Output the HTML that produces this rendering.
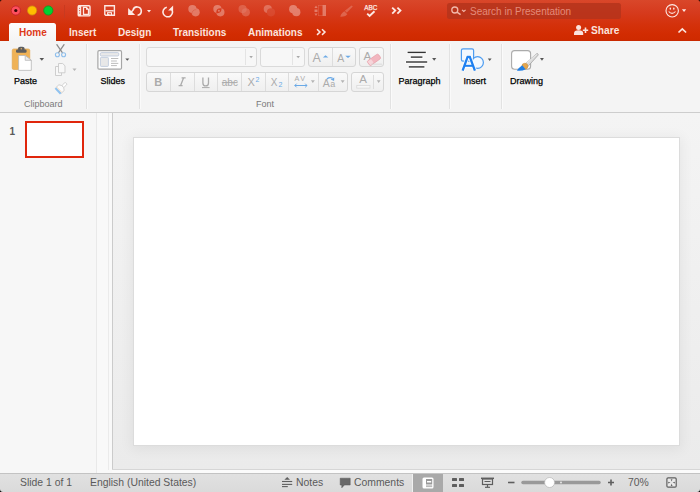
<!DOCTYPE html>
<html><head><meta charset="utf-8">
<style>
*{margin:0;padding:0;box-sizing:border-box}
html,body{width:700px;height:492px;overflow:hidden;background:#ececec;font-family:"Liberation Sans",sans-serif}
.a{position:absolute}
svg{position:absolute;overflow:visible}
#title{left:0;top:0;width:700px;height:41px;background:linear-gradient(#d9472a 0px,#d63b1e 12px,#d4320c 24px,#d22c02 34px,#cf2a00 40px,#c22800 41px)}
#ribbon{left:0;top:41px;width:700px;height:71px;background:#f4f4f4}
#ribline{left:0;top:112px;width:700px;height:1px;background:#cdcdcd}
#panel{left:0;top:113px;width:96px;height:360px;background:#f7f7f7}
#split{left:96px;top:113px;width:17px;height:360px;background:#f9f9f9;border-left:1px solid #e9e9e9;border-right:1px solid #cbcbcb}
#splitl{left:108px;top:113px;width:1px;height:357px;background:#ebebeb}
#main{left:113px;top:113px;width:587px;height:356px;background:linear-gradient(#f4f4f4,#ebebeb)}
#slide{left:133px;top:137px;width:547px;height:309px;background:#fff;border:1px solid #dcdcdc;box-shadow:0 2px 12px 2px rgba(0,0,0,.055)}
#mainbot{left:112px;top:469px;width:588px;height:1px;background:#d6d6d6}
#mainbot2{left:112px;top:470px;width:588px;height:3px;background:#fbfbfb}
#status{left:0;top:473px;width:700px;height:19px;background:linear-gradient(#e1e1e1,#dadada);border-top:1px solid #c3c3c3}
.tab{top:24px;height:17px;font-size:10px;font-weight:bold;color:#fbe3dd;line-height:17px;white-space:nowrap}
.lbl{font-size:9px;color:#000;-webkit-text-stroke:0.25px #000;white-space:nowrap;line-height:10px}
.glbl{font-size:9px;color:#7a7a7a;white-space:nowrap;line-height:10px}
.sep{width:1px;top:44px;height:65px;background:#e2e2e2;box-shadow:1px 0 0 #fafafa}
.st{font-size:10.4px;color:#5a5a5a;white-space:nowrap;line-height:12px;top:477px}
.box{border:1px solid #dadada;border-radius:3px;background:#f7f7f7}
.btn{border:1px solid #d6d6d6;border-radius:3px;background:linear-gradient(#f9f9f9,#efefef)}
.dv{width:1px;background:#dddddd}
.dis{color:#b9b9b9}
</style></head><body>
<div id="title" class="a"></div>
<div id="ribbon" class="a"></div>
<div id="ribline" class="a"></div>
<div id="panel" class="a"></div>
<div id="split" class="a"></div>
<div id="splitl" class="a"></div>
<div id="main" class="a"></div>
<div id="slide" class="a"></div>
<div id="mainbot" class="a"></div>
<div id="mainbot2" class="a"></div>
<div id="status" class="a"></div>

<!-- traffic lights -->
<svg style="left:0;top:0" width="70" height="22">
 <circle cx="15.8" cy="10.5" r="4.6" fill="#fd4f5d" stroke="#c0202a" stroke-width="0.8"/>
 <circle cx="15.8" cy="10.5" r="1.6" fill="#3b0505"/>
 <circle cx="32.1" cy="10.5" r="4.6" fill="#ffbe00" stroke="#d08a10" stroke-width="0.8"/>
 <circle cx="48.3" cy="10.5" r="4.6" fill="#00d133" stroke="#0a9a20" stroke-width="0.8"/>
 <line x1="64.5" y1="5" x2="64.5" y2="18" stroke="#c83a20" stroke-width="1"/>
</svg>

<!-- toolbar icons -->
<svg style="left:0;top:0" width="700" height="22" fill="none" stroke="#fde9e4" stroke-width="1.3">
 <!-- sidebar -->
 <rect x="78.2" y="5.7" width="11.8" height="10.2" rx="1" stroke-width="1.4"/>
 <rect x="78" y="5.5" width="3.2" height="10.6" fill="#fde9e4" stroke="none"/>
 <g fill="#d63b1e" stroke="none"><circle cx="79.6" cy="8.2" r="0.55"/><circle cx="79.6" cy="10.6" r="0.55"/><circle cx="79.6" cy="13" r="0.55"/></g>
 <path d="M83.5 7.3 H86.3 L88.5 9.5 V14.5 H83.5 Z" stroke-width="1.3"/>
 <path d="M86 7 V9.8 H88.8 Z" fill="#fde9e4" stroke="none"/>
 <!-- save -->
 <path d="M104.8 5.8 H114.4 V15.3 H105.7 L104.8 14.4 Z" stroke-width="1.4"/>
 <path d="M105.5 10.8 H113.7" stroke-width="1.4"/>
 <rect x="107.6" y="12.7" width="3.9" height="2.7" stroke-width="1.1"/>
 <rect x="108" y="13.9" width="1.3" height="1.5" fill="#fde9e4" stroke="none"/>
 <!-- undo -->
 <path d="M128.1 8.1 V15.1 H135.1 Z" fill="#fde9e4" stroke="none"/>
 <path d="M130.5 12.7 L133 10.2 A4.2 4.2 0 1 1 137.6 15.3" stroke-width="1.6"/>
 <path d="M147 10 h4 l-2 2.6z" fill="#fde9e4" stroke="none"/>
 <!-- redo -->
 <path d="M173.1 5.6 V10.6 H168.1 Z" fill="#fde9e4" stroke="none"/>
 <path d="M170.8 8.3 A4.8 4.8 0 1 1 166.8 7.3" stroke-width="1.6"/>
</svg>
<svg style="left:0;top:0" width="700" height="22" fill="#ffffff" fill-opacity="0.32" stroke="none">
 <g opacity="0.32" fill="#fff" fill-opacity="1"><circle cx="192.4" cy="9.1" r="4.1"/><circle cx="195.6" cy="12.3" r="4.1"/></g>
 <path d="M196.3 9.7 A4.1 4.1 0 0 0 191.8 13.8" fill="none" stroke="#d63b1e" stroke-opacity="0.4" stroke-width="0.8"/>
 <g opacity="0.32" fill="#fff" fill-opacity="1"><path fill-rule="evenodd" d="M224.5 12.3 a4.1 4.1 0 1 0 -8.2 0 a4.1 4.1 0 1 0 8.2 0Z M221.5 9.1 a4.1 4.1 0 1 0 -8.2 0 a4.1 4.1 0 1 0 8.2 0Z"/><circle cx="218.9" cy="10.7" r="1"/></g>
 <g opacity="0.32" fill="#fff" fill-opacity="1"><circle cx="242.6" cy="9.1" r="4.1" fill-opacity="0.55"/><circle cx="245.8" cy="12.3" r="4.1" fill-opacity="0.6"/></g>
 <g opacity="0.32" fill="#fff" fill-opacity="1"><circle cx="267.8" cy="9.1" r="4.1" fill-opacity="0.8"/><circle cx="271" cy="12.3" r="4.1" fill="#e06a55"/></g>
 <g opacity="0.34" fill="#fff" fill-opacity="1"><circle cx="293.2" cy="9.2" r="4.1"/><circle cx="296.3" cy="12.2" r="4.1"/></g>
 <!-- dashed list -->
 <rect x="322.8" y="5" width="3.2" height="11"/>
 <rect x="318.5" y="5.3" width="4.3" height="10.4" fill="none" stroke="#fff" stroke-opacity="0.2" stroke-width="0.6"/>
 <path d="M314.4 8 l1.6-2.4 1.6 2.4z M314.5 9.5 h3 v2.6 h-3z M314.4 13.5 h3.2 l-1.6 2.4z"/>
 <!-- brush -->
 <path d="M351.6 5.4 L352.8 6.6 L346.8 12.8 L344.8 10.8 Z" fill-opacity="0.2"/>
 <path d="M344.3 11.3 L347.3 14.3 L345.4 16 Q342.8 17 340.3 16.8 Q340.5 14.4 342.2 12.9 Z" fill-opacity="0.22"/>
</svg>
<svg style="left:0;top:0" width="700" height="22">
 <text x="364.2" y="9.9" font-family="Liberation Sans" font-size="7" fill="#fde9e4" stroke="#fde9e4" stroke-width="0.25" textLength="13.2" lengthAdjust="spacingAndGlyphs">ABC</text>
 <path d="M367.2 13.6 l2.4 2.4 4.9 -4.8" fill="none" stroke="#fde9e4" stroke-width="1.9"/>
 <path d="M392.2 7.6 l3.1 3 -3.1 3 M397.4 7.6 l3.1 3 -3.1 3" fill="none" stroke="#fde9e4" stroke-width="1.8"/>
 <!-- search box -->
 <rect x="447" y="3" width="174" height="16" rx="2.5" fill="#b3331b" fill-opacity="0.8"/>
 <circle cx="454.8" cy="10" r="3" fill="none" stroke="#f2b8aa" stroke-width="1.3"/>
 <line x1="457" y1="12.2" x2="460.6" y2="14.6" stroke="#f2b8aa" stroke-width="1.5"/>
 <path d="M462 9.8 l1.8 1.6 1.8 -1.6" fill="none" stroke="#f2b8aa" stroke-width="1.1"/>
 <!-- smiley -->
 <circle cx="672.2" cy="10.8" r="6.2" fill="none" stroke="#fde9e4" stroke-width="1.1"/>
 <ellipse cx="670.3" cy="8.7" rx="0.75" ry="1.15" fill="#fde9e4"/><ellipse cx="673.8" cy="8.7" rx="0.75" ry="1.15" fill="#fde9e4"/>
 <path d="M668.7 11.5 q3.3 3.8 6.8 0" fill="none" stroke="#fde9e4" stroke-width="1.1"/>
 <path d="M681.9 9.2 h4.3 l-2.15 2.7z" fill="#fde9e4"/>
</svg>
<div class="a" style="left:470px;top:5px;font-size:10px;line-height:14px;color:#e48b7a;white-space:nowrap">Search in Presentation</div>

<!-- tabs -->
<div class="a" style="left:9px;top:23px;width:47px;height:18px;background:linear-gradient(#fdfdfd,#f4f4f4);border-radius:2.5px 2.5px 0 0"></div>
<div class="a tab" style="left:19px;color:#de3a1a">Home</div>
<div class="a tab" style="left:69px">Insert</div>
<div class="a tab" style="left:118px">Design</div>
<div class="a tab" style="left:173px">Transitions</div>
<div class="a tab" style="left:248px">Animations</div>
<svg style="left:0;top:0" width="700" height="41">
 <path d="M317 29.3 l3 2.8 -3 2.8 M322 29.3 l3 2.8 -3 2.8" fill="none" stroke="#fbe3dd" stroke-width="1.5"/>
 <!-- share icon -->
 <circle cx="578.6" cy="27.5" r="2.5" fill="#fbe3dd"/>
 <path d="M574 35 v-1.6 q0 -3.2 4.6 -3.2 q4.6 0 4.6 3.2 v1.6z" fill="#fbe3dd"/>
 <path d="M582.8 30.2 h5.4 M585.5 27.5 v5.4" stroke="#fbe3dd" stroke-width="1.6"/>
 <path d="M678.5 32.5 l3.8 -3.6 3.8 3.6" fill="none" stroke="#fbe3dd" stroke-width="1.7"/>
</svg>
<div class="a tab" style="left:591px;top:22.4px;font-size:10.2px">Share</div>

<!-- ribbon separators -->
<div class="a sep" style="left:86px"></div>
<div class="a sep" style="left:139px"></div>
<div class="a sep" style="left:390px"></div>
<div class="a sep" style="left:449px"></div>
<div class="a sep" style="left:501px"></div>

<!-- clipboard group -->
<svg style="left:0;top:40px" width="140" height="72">
 <!-- clipboard -->
 <rect x="12.2" y="8.9" width="17.6" height="20.6" rx="1.6" fill="#efb256" stroke="#dfa24c" stroke-width="0.6"/>
 <rect x="17.9" y="6.8" width="6.8" height="4.6" rx="2.4" fill="#5e5e5e"/><rect x="16" y="9.6" width="10.6" height="3.2" rx="1.2" fill="#5e5e5e"/>
 <circle cx="21.3" cy="8.7" r="0.7" fill="#e9b465"/>
 <path d="M18.6 15.5 h6.6 l6.1 4.8 v10.1 h-12.7z" fill="#fff" stroke="#b8b8b8" stroke-width="0.8"/>
 <path d="M25.2 15.5 v4.8 h6.1z" fill="#ececec" stroke="#b8b8b8" stroke-width="0.8" stroke-linejoin="round"/>
 <path d="M39.5 18 h4.6 l-2.3 2.8z" fill="#555"/>
 <!-- scissors -->
 <g fill="#8c8c8c"><path d="M56 4.4 L57.2 4 L63 12.6 L62.2 13.4Z"/><path d="M64.9 4.4 L63.7 4 L57.9 12.6 L58.7 13.4Z"/></g>
 <g fill="none" stroke="#8fbfec" stroke-width="1.1"><circle cx="57.4" cy="14.7" r="2"/><circle cx="63.6" cy="14.7" r="2"/></g>
 <!-- copy -->
 <g fill="#f8f8f8" stroke="#c9c9c9" stroke-width="0.9"><path d="M55.5 26.5 h4 l2 2 v7 h-6z"/><path d="M58.5 23.5 h4.2 l2.3 2.3 v7 h-6.5z"/></g>
 <path d="M72.5 28.6 h4 l-2 2.4z" fill="#b5b5b5"/>
 <!-- painter -->
 <g transform="translate(57.3,51.6) rotate(47)">
  <rect x="-1.4" y="-12.3" width="2.8" height="5.2" rx="1.2" fill="#fff" stroke="#c9c9c9" stroke-width="0.8"/>
  <path d="M-3.9 -1.8 V-5.8 L-1.4 -7.4 H1.4 L3.9 -5.8 V-1.8Z" fill="#fbfbfb" stroke="#c9c9c9" stroke-width="0.8"/>
  <rect x="-3.9" y="-2" width="7.8" height="2" fill="#8ec2f0"/>
  <line x1="-3.5" y1="-2.8" x2="3.5" y2="-2.8" stroke="#f3cfa8" stroke-width="0.6"/>
 </g>
</svg>
<div class="a lbl" style="left:14px;top:76px">Paste</div>
<div class="a glbl" style="left:24px;top:99px">Clipboard</div>

<!-- slides -->
<svg style="left:0;top:40px" width="140" height="72">
 <rect x="97.9" y="10.7" width="23.6" height="18.5" rx="1.2" fill="#fff" stroke="#a6a6a6" stroke-width="1.2"/>
 <rect x="100.3" y="12.6" width="18.5" height="3.4" rx="1.2" fill="#e9e9e9" stroke="#b9c5d9" stroke-width="0.8"/>
 <rect x="100.4" y="17.4" width="8" height="9" rx="0.8" fill="#e8e8e8" stroke="#b9c5d9" stroke-width="0.8"/>
 <g stroke="#b5b5b5" stroke-width="0.9"><line x1="111" y1="18.5" x2="118.3" y2="18.5"/><line x1="111" y1="21" x2="116.9" y2="21"/><line x1="111" y1="23.4" x2="118.3" y2="23.4"/><line x1="111" y1="25.6" x2="116.9" y2="25.6"/></g>
 <path d="M125.3 18.4 h4 l-2 2.4z" fill="#555"/>
</svg>
<div class="a lbl" style="left:100.5px;top:76px">Slides</div>

<!-- font group -->
<div class="a box" style="left:146px;top:47px;width:111px;height:20px"></div>
<div class="a dv" style="left:245px;top:49px;height:16px;background:#e4e4e4"></div>
<div class="a box" style="left:260px;top:47px;width:45px;height:20px"></div>
<div class="a dv" style="left:292px;top:49px;height:16px;background:#e4e4e4"></div>
<div class="a btn" style="left:308px;top:47px;width:48px;height:20px"></div>
<div class="a dv" style="left:332px;top:48px;height:18px"></div>
<div class="a btn" style="left:359px;top:47px;width:25px;height:20px"></div>
<div class="a btn" style="left:146px;top:72px;width:202px;height:20px"></div>
<div class="a dv" style="left:170px;top:73px;height:18px"></div>
<div class="a dv" style="left:194px;top:73px;height:18px"></div>
<div class="a dv" style="left:217px;top:73px;height:18px"></div>
<div class="a dv" style="left:241px;top:73px;height:18px"></div>
<div class="a dv" style="left:265px;top:73px;height:18px"></div>
<div class="a dv" style="left:288px;top:73px;height:18px"></div>
<div class="a dv" style="left:318px;top:73px;height:18px"></div>
<div class="a btn" style="left:351px;top:72px;width:33px;height:20px"></div>
<div class="a dv" style="left:373px;top:75px;height:14px"></div>
<svg style="left:0;top:40px" width="700" height="72">
 <g fill="#a9a9a9">
  <path d="M249.3 16 h3.6 l-1.8 2.2z"/>
  <path d="M296.4 16 h3.6 l-1.8 2.2z"/>
 </g>
 <g font-family="Liberation Sans" fill="#ababab">
  <text x="312.6" y="22.2" font-size="12.5">A</text>
  <text x="337.2" y="22.2" font-size="10.5">A</text>
  <text x="363.4" y="20" font-size="11.5">A</text>
  <text x="154.2" y="46" font-size="11" font-weight="bold">B</text>
  <text x="221.8" y="46" font-size="10">abc</text>
  <text x="247.4" y="46.2" font-size="11">X</text>
  <text x="270.8" y="46.2" font-size="10">X</text>
  <text x="294.6" y="41.4" font-size="7.2" letter-spacing="1.3">AV</text>
  <text x="322.7" y="46.8" font-size="10.5">A</text><text x="330.2" y="46.6" font-size="9">a</text>
  <text x="359.3" y="43.1" font-size="11.5">A</text>
 </g>
 <g fill="none" stroke="#ababab">
  <path d="M181.6 37.8 h4 M178.6 45.6 h4 M183.6 37.8 L180.6 45.6" stroke-width="1.3"/>
  <path d="M202.9 37.6 v5.3 q0 3 2.8 3 q2.8 0 2.8 -3 v-5.3" stroke-width="1.3"/>
  <line x1="202" y1="47.6" x2="209.6" y2="47.6" stroke-width="1"/>
  <line x1="221.8" y1="42.6" x2="237.6" y2="42.6" stroke-width="1"/>
 </g>
 <g fill="#6aa9e6">
  <path d="M322.8 17.6 l2.75-2.4 2.75 2.4z"/>
  <path d="M345.2 15.8 h5.6 l-2.8 2.2z"/><path d="M330.6 39.4 L334.3 37.4 L334.1 41 Z"/>
  <text x="255.4" y="42.2" font-family="Liberation Sans" font-size="7">2</text>
  <text x="278.6" y="46.6" font-family="Liberation Sans" font-size="7">2</text>
 </g>
 <g stroke="#6aa9e6" stroke-width="1" fill="none"><path d="M294.8 45.5 h12.2 M296.6 43.7 l-1.8 1.8 1.8 1.8 M305.2 43.7 l1.8 1.8 -1.8 1.8"/><path d="M326.9 38.9 q2.6 -2 5.6 -0.8" stroke-width="1.3"/></g>
 <g fill="#b4b4b4"><path d="M310.9 40.2 h3.9 l-1.95 2.7z"/><path d="M340.7 40.2 h3.9 l-1.95 2.7z"/><path d="M376.8 40.3 h3.8 l-1.9 2.6z"/></g>
 <rect x="356.8" y="45.6" width="13.2" height="2.5" fill="#f7f7f7" stroke="#d6d6d6" stroke-width="0.7"/>
 <!-- eraser -->
 <g transform="translate(374,19.8) rotate(-35)">
  <rect x="-6.7" y="-2.8" width="13.4" height="5.6" rx="1.4" fill="#f2b6bf" stroke="#e6a0aa" stroke-width="0.7"/>
  <rect x="-6.2" y="-2.3" width="4.2" height="4.6" rx="0.9" fill="#f7d5da"/>
 </g>
 <line x1="371" y1="24.2" x2="382" y2="24.2" stroke="#d8d8d8" stroke-width="0.8"/>
</svg>
<div class="a glbl" style="left:256px;top:99px">Font</div>

<!-- paragraph / insert / drawing -->
<svg style="left:0;top:40px" width="700" height="72">
 <g stroke="#fff" stroke-width="3.2" stroke-linecap="round" opacity="0.8"><line x1="408" y1="12.6" x2="425.4" y2="12.6"/><line x1="411" y1="17.3" x2="422" y2="17.3"/><line x1="406.4" y1="22.2" x2="426.8" y2="22.2"/><line x1="409.2" y1="27.1" x2="424" y2="27.1"/></g>
 <g stroke="#333" stroke-width="1.4"><line x1="407.6" y1="12.4" x2="425.8" y2="12.4"/><line x1="410.8" y1="17.1" x2="422.4" y2="17.1"/><line x1="406" y1="22" x2="427.2" y2="22"/><line x1="408.8" y1="26.9" x2="424.4" y2="26.9"/></g>
 <path d="M432.1 18.1 h4.2 l-2.1 2.7z" fill="#555"/>
 <!-- insert icon -->
 <rect x="461.4" y="8.8" width="12.2" height="12.4" rx="1.6" fill="#f1f7fe" stroke="#4d9cf0" stroke-width="1.2"/>
 <circle cx="477.6" cy="22.5" r="5.8" fill="#f4f9ff" stroke="#4d9cf0" stroke-width="1.2"/>
 <path d="M462.6 30.6 L467.6 16.9 H469.8 L474.9 30.6 M464.8 26 H472.6" fill="none" stroke="#fff" stroke-width="4" stroke-linejoin="miter" opacity="0.9"/>
 <path d="M462.6 30.6 L467.6 16.9 H469.8 L474.9 30.6" fill="none" stroke="#1f80f0" stroke-width="2.3" stroke-linejoin="miter"/>
 <line x1="464.8" y1="25.8" x2="472.6" y2="25.8" stroke="#1f80f0" stroke-width="2"/>
 <path d="M487.8 18.5 h3.8 l-1.9 2.5z" fill="#555"/>
 <!-- drawing icon -->
 <rect x="511.6" y="10.6" width="19" height="18.6" rx="3" fill="#fff" stroke="#ababab" stroke-width="1.1"/>
 <path d="M524.6 24.6 L536.4 13.8 Q537.6 13.2 538.1 14.1 Q538.3 14.9 537.9 15.4 L527.4 27Z" fill="#dcdcdc" stroke="#9a9a9a" stroke-width="0.7"/>
 <path d="M525.2 24.6 L536.6 14.2" stroke="#f4f4f4" stroke-width="0.8"/>
 <circle cx="524.9" cy="26.2" r="3" fill="#e3a54e" stroke="#c98b32" stroke-width="0.5"/>
 <path d="M522.2 25.2 Q518.8 27.6 516.8 30.6 Q522 31.4 525.6 29.2 Z" fill="#1f7fe6"/>
 <path d="M540 18.1 h3.9 l-1.95 2.7z" fill="#555"/>
</svg>
<div class="a lbl" style="left:398.5px;top:76px">Paragraph</div>
<div class="a lbl" style="left:463.5px;top:76px">Insert</div>
<div class="a lbl" style="left:510px;top:76px">Drawing</div>

<!-- thumbnail -->
<div class="a" style="left:9.4px;top:125.6px;font-size:10px;font-weight:bold;color:#5a5a5a;line-height:11px">1</div>
<div class="a" style="left:25px;top:121px;width:59px;height:37px;border:2px solid #e0260c;background:#fff"></div>

<!-- status bar -->
<div class="a st" style="left:20px">Slide 1 of 1</div>
<div class="a st" style="left:90px">English (United States)</div>
<div class="a st" style="left:296px">Notes</div>
<div class="a st" style="left:354px">Comments</div>
<div class="a" style="left:412px;top:474px;width:1px;height:18px;background:#f0f0f0"></div>
<div class="a" style="left:413px;top:474px;width:30px;height:18px;background:#a9a9a9"></div>
<div class="a st" style="left:628px">70%</div>
<svg style="left:0;top:472px" width="700" height="20">
 <g stroke="#5e5e5e" stroke-width="1.1"><line x1="282" y1="9.5" x2="292.2" y2="9.5"/><line x1="282" y1="12.4" x2="292.2" y2="12.4"/><line x1="282" y1="14.6" x2="287.8" y2="14.6"/></g>
 <path d="M284.4 7.8 l2.8-2.7 2.8 2.7z" fill="#5e5e5e"/>
 <path d="M340.2 6.2 h10 v6.8 h-5.8 l-2.6 2.8 v-2.8 h-1.6z" fill="#686868" stroke="#555" stroke-width="0.5"/>
 <rect x="422.5" y="5.5" width="11" height="11" rx="1.5" fill="#fff"/>
 <rect x="426" y="7" width="6.2" height="5.5" fill="#999"/>
 <rect x="427" y="9" width="4.2" height="1.5" fill="#fff"/>
 <rect x="426" y="13.3" width="6.2" height="1.8" fill="#bbb"/>
 <g fill="#5e5e5e"><rect x="452" y="6" width="5" height="3" rx="0.5"/><rect x="459" y="6" width="5" height="3" rx="0.5"/><rect x="452" y="12" width="5" height="3" rx="0.5"/><rect x="459" y="12" width="5" height="3" rx="0.5"/></g>
 <g fill="none" stroke="#5e5e5e"><rect x="482.5" y="7" width="10" height="5.5" stroke-width="1.2"/><line x1="481" y1="6.3" x2="494" y2="6.3" stroke-width="1.5"/><line x1="487.5" y1="12.5" x2="487.5" y2="15" stroke-width="1.2"/><line x1="485" y1="15.3" x2="490" y2="15.3" stroke-width="1.2"/><line x1="484.5" y1="9.5" x2="490.5" y2="9.5" stroke-width="1"/></g>
 <line x1="508" y1="10.5" x2="514.5" y2="10.5" stroke="#5e5e5e" stroke-width="1.6"/>
 <line x1="523" y1="10.5" x2="599" y2="10.5" stroke="#999" stroke-width="3.5" stroke-linecap="round"/>
 <circle cx="561" cy="10.5" r="0.9" fill="#eee"/>
 <circle cx="549.6" cy="10.5" r="5" fill="#fff" stroke="#b5b5b5" stroke-width="0.7"/>
 <path d="M608 10.5 h6 M611 7.5 v6" stroke="#5e5e5e" stroke-width="1.6"/>
 <rect x="666.9" y="5.9" width="9.3" height="9.3" rx="1.2" fill="#e9e9e9" stroke="#5e5e5e" stroke-width="1.2"/>
 <g fill="#666"><path d="M670.7 7.2 h1.8 l-0.9 2.3z"/><path d="M670.7 13.9 h1.8 l-0.9 -2.3z"/><path d="M668.2 9.65 v1.8 l2.3 -0.9z"/><path d="M674.9 9.65 v1.8 l-2.3 -0.9z"/></g>
</svg>

<svg style="left:0;top:0" width="700" height="492">
 <path d="M0 0 H2.2 A2.2 2.2 0 0 0 0 2.2Z" fill="#000"/>
 <path d="M700 0 H697.8 A2.2 2.2 0 0 1 700 2.2Z" fill="#000"/>
 <path d="M0 492 H3 A3 3 0 0 1 0 489Z" fill="#000"/>
 <path d="M700 492 H697 A3 3 0 0 0 700 489Z" fill="#000"/>
</svg>
</body></html>
